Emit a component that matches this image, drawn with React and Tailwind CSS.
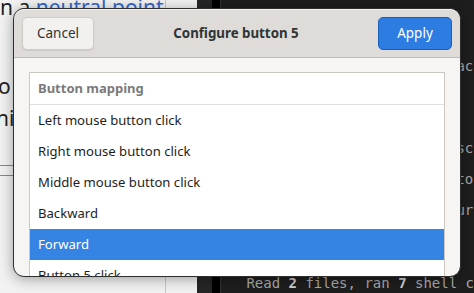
import React from 'react';

const rows = [
  'Left mouse button click',
  'Right mouse button click',
  'Middle mouse button click',
  'Backward',
  'Forward',
  'Button 5 click',
];

const Backdrop = () => (
  <div className="absolute inset-0 flex">
    {/* browser page behind */}
    <div className="w-[198px] h-full bg-[#f2f2f2] flex font-['Noto_Sans',sans-serif] text-[21px] text-[#222]">
      <div className="w-[165px] h-full flex flex-col pt-[0px] leading-[32px] -mt-[9px]">
        <div className="whitespace-nowrap">
          n a <span className="text-[#3366cc] underline">neutral point</span>
        </div>
        <div className="mt-[47px] -ml-[2px]">o</div>
        <div className="-ml-[4px]">ni</div>
        <div className="mt-[31px] w-[30px] h-px bg-[#888]" />
        <div className="mt-[9px] w-[30px] h-px bg-[#888]" />
      </div>
      <div className="h-full w-px bg-[#c8c8c8]" />
    </div>
    <div className="w-[15px] h-full bg-[#262626]" />
    <div className="w-[8px] h-full bg-black" />
    <div className="w-px h-full bg-[#333]" />
    {/* terminal */}
    <div className="flex-1 h-full bg-[#1e1e1e] flex flex-col font-['DejaVu_Sans_Mono',monospace] text-[14px] leading-[31px] text-[#a8a8a8] pt-[51px]">
      <div className="pl-[235px]">ac</div>
      <div className="pl-[235px] mt-[51px]">sc</div>
      <div className="pl-[235px]">to</div>
      <div className="pl-[235px]">ur</div>
      <div className="pl-[25px] mt-[42px] whitespace-nowrap">
        Read <b className="text-[#d0d0d0]">2</b> files, ran <b className="text-[#d0d0d0]">7</b> shell c
      </div>
    </div>
  </div>
);

export default function App() {
  return (
    <div className="relative w-[474px] h-[293px] overflow-hidden">
      <Backdrop />
      <div className="absolute left-[13px] top-[8px] w-[448px] h-[269px] rounded-[11px] border border-[#2e2e2e] bg-[#f6f5f4] overflow-hidden shadow-[0_2px_14px_rgba(0,0,0,0.35)] font-['Noto_Sans',sans-serif] flex flex-col">
        <div className="h-[49px] shrink-0 bg-[#dedbd8] border-b border-[#c0bdb8] flex items-center justify-between px-[8px] rounded-t-[10px] border-t border-t-white/70">
          <button className="w-[72px] h-[33px] rounded-[5px] bg-[#f2f1ef] border border-[#cfcbc6] shadow-[0_1px_1px_rgba(0,0,0,0.08)] text-[13.5px] text-[#2e3436]">
            Cancel
          </button>
          <div className="text-[13.3px] font-bold text-[#2e3436]">Configure button 5</div>
          <button className="w-[74px] h-[33px] rounded-[5px] bg-[#2d7ce2] border border-[#1b5fb8] text-[13.5px] text-white">
            Apply
          </button>
        </div>
        <div className="flex-1 pt-[14px] pl-[15px] pr-[15px]">
          <div className="bg-white border border-[#cdc7c2] border-b-0 h-full">
            <div className="h-[32px] flex items-center px-[8px] text-[13px] font-bold text-[#7a7a7a] border-b border-[#e2e0de]">
              Button mapping
            </div>
            {rows.map((r) => (
              <div
                key={r}
                className={
                  r === 'Forward'
                    ? 'h-[31px] flex items-center px-[8px] text-[13.1px] bg-[#3584e4] text-white'
                    : 'h-[31px] flex items-center px-[8px] text-[13.1px] text-[#1e1e1e]'
                }
              >
                {r}
              </div>
            ))}
          </div>
        </div>
      </div>
    </div>
  );
}
